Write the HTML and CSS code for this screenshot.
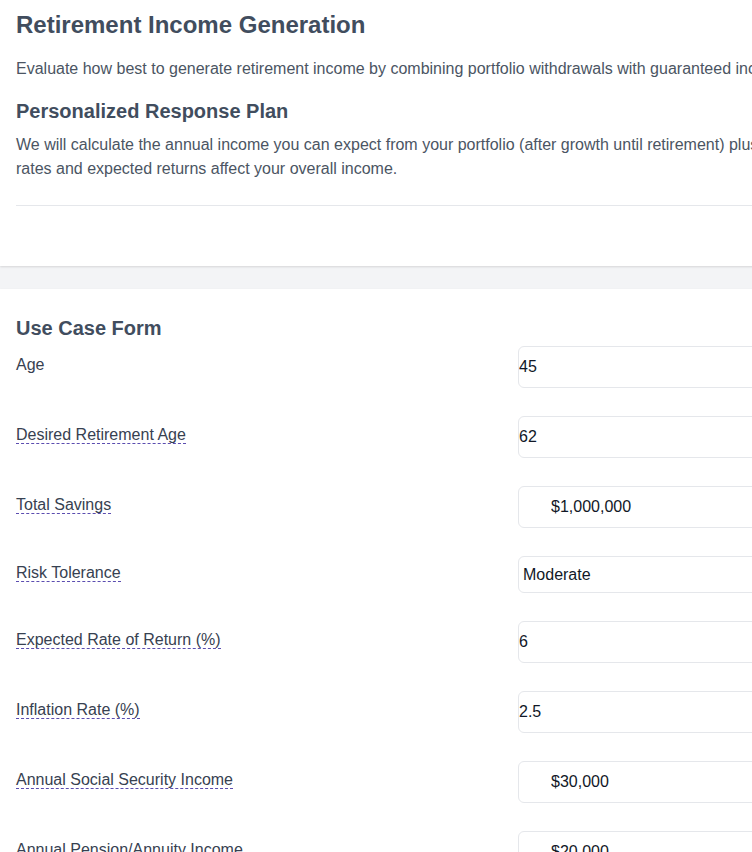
FILE: index.html
```html
<!DOCTYPE html>
<html lang="en">
<head>
  <meta charset="UTF-8">
  <meta name="viewport" content="width=device-width, initial-scale=1.0">
  <title>Retirement Income Generation</title>
  <link rel="stylesheet" href="styles.css">
</head>
<body>
  <div class="page">
    <section class="card intro">
      <h1>Retirement Income Generation</h1>
      <p>Evaluate how best to generate retirement income by combining portfolio withdrawals with guaranteed income sources.</p>
      <h2>Personalized Response Plan</h2>
      <p class="plan-text">We will calculate the annual income you can expect from your portfolio (after growth until retirement) plus guaranteed income sources, and how different withdrawal rates and expected returns affect your overall income.</p>
      <hr>
      <div class="results" id="results"></div>
    </section>

    <section class="card form-card">
      <h3>Use Case Form</h3>
      <form class="use-case-form">
        <div class="form-row">
          <label for="age">Age</label>
          <input type="number" id="age" value="45">
        </div>
        <div class="form-row">
          <label for="retireAge"><span class="hint" title="The age at which you plan to stop working">Desired Retirement Age</span></label>
          <input type="number" id="retireAge" value="62">
        </div>
        <div class="form-row">
          <label for="savings"><span class="hint" title="All retirement savings combined">Total Savings</span></label>
          <input type="text" id="savings" class="money" value="$1,000,000">
        </div>
        <div class="form-row">
          <label for="risk"><span class="hint" title="How much market risk you are comfortable with">Risk Tolerance</span></label>
          <select id="risk">
            <option>Conservative</option>
            <option selected>Moderate</option>
            <option>Aggressive</option>
          </select>
        </div>
        <div class="form-row">
          <label for="returnRate"><span class="hint" title="Average yearly portfolio growth">Expected Rate of Return (%)</span></label>
          <input type="number" id="returnRate" value="6">
        </div>
        <div class="form-row">
          <label for="inflation"><span class="hint" title="Expected yearly inflation">Inflation Rate (%)</span></label>
          <input type="number" id="inflation" value="2.5">
        </div>
        <div class="form-row">
          <label for="socialSecurity"><span class="hint" title="Estimated yearly Social Security benefit">Annual Social Security Income</span></label>
          <input type="text" id="socialSecurity" class="money" value="$30,000">
        </div>
        <div class="form-row">
          <label for="pension"><span class="hint" title="Pension or annuity payments per year">Annual Pension/Annuity Income</span></label>
          <input type="text" id="pension" class="money" value="$20,000">
        </div>
      </form>
    </section>
  </div>
</body>
</html>
```

FILE: styles.css
```css
html, body {
  overflow: hidden;
}

body {
  margin: 0;
  font-family: "Liberation Sans", Arial, sans-serif;
  font-size: 16px;
  line-height: 24px;
  background-color: #f3f4f6;
  color: #374151;
}

.page {
  width: 1212px;
}

.card {
  background-color: #fff;
  padding: 8px 16px 0;
  box-shadow: 0 1px 2px rgba(0, 0, 0, 0.12);
}

.intro {
  padding-top: 9px;
  margin-bottom: 23px;
}

h1 {
  font-size: 24px;
  line-height: 32px;
  margin: 0 0 16px;
  color: #414d5e;
}

h2, h3 {
  font-size: 20px;
  line-height: 28px;
  margin: 0 0 8px;
  color: #414d5e;
}

p {
  margin: 0 0 16px;
  color: #4b5563;
}

.plan-text {
  margin-bottom: 0;
}

hr {
  border: none;
  border-top: 1px solid #e5e7eb;
  margin: 24px 0 0;
}

.results {
  height: 60px;
}

.form-card {
  padding-top: 25px;
  padding-bottom: 40px;
}

.form-card h3 {
  margin-bottom: 4px;
}

.use-case-form {
  display: flex;
  flex-direction: column;
  gap: 28px;
}

.form-row {
  display: grid;
  grid-template-columns: 502px 1fr;
  align-items: center;
}

.form-row label {
  margin-bottom: 4px;
  color: #374151;
}

.hint {
  border-bottom: 1px dashed #5b4db0;
  cursor: help;
}

input, select {
  box-sizing: border-box;
  width: 100%;
  height: 42px;
  padding: 0;
  font-family: "Liberation Sans", Arial, sans-serif;
  font-size: 16px;
  color: #111827;
  background-color: #fff;
  border: 1px solid #e5e7eb;
  border-radius: 6px;
  outline: none;
}

input.money {
  padding-left: 32px;
}

select {
  height: 37px;
  padding: 0 4px;
  appearance: none;
}
```
